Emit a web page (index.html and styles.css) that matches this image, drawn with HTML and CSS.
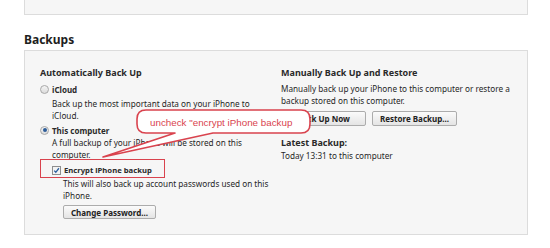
FILE: index.html
```html
<!DOCTYPE html>
<html>
<head>
<meta charset="utf-8">
<link rel="stylesheet" href="styles.css">
</head>
<body>
<div class="page">
  <div class="top-panel"></div>
  <h2 class="section-title">Backups</h2>
  <div class="panel">
    <div class="col col-left">
      <div class="heading">Automatically Back Up</div>
      <div class="option opt-icloud">
        <span class="radio"></span><span class="opt-label">iCloud</span>
      </div>
      <div class="desc indent desc-icloud">Back up the most important data on your iPhone to<br>iCloud.</div>
      <div class="option opt-computer">
        <span class="radio checked"></span><span class="opt-label">This computer</span>
      </div>
      <div class="desc indent">A full backup of your iPhone will be stored on this<br>computer.</div>
      <div class="option encrypt">
        <span class="checkbox">
          <svg width="9" height="9" viewBox="0 0 9 9"><path d="M1.6 4.6 L3.6 6.8 L7.6 1.6" fill="none" stroke="#2d5f9e" stroke-width="1.7"/></svg>
        </span><span class="opt-label">Encrypt iPhone backup</span>
      </div>
      <div class="desc indent2 desc-encrypt">This will also back up account passwords used on this<br>iPhone.</div>
      <div class="indent2 btn-row left-btns"><span class="btn btn-password">Change Password...</span></div>
    </div>
    <div class="col col-right">
      <div class="heading">Manually Back Up and Restore</div>
      <div class="desc right-desc">Manually back up your iPhone to this computer or restore a<br>backup stored on this computer.</div>
      <div class="btn-row right-btns"><span class="btn btn-backup">Back Up Now</span><span class="btn btn-restore">Restore Backup...</span></div>
      <div class="heading latest">Latest Backup:</div>
      <div class="desc">Today 13:31 to this computer</div>
    </div>
    <div class="highlight"></div>
    <div class="callout">
      <svg class="callout-shape" width="240" height="60" viewBox="0 0 240 60">
        <path d="M61 2 H216 Q225 2 225 11 V16 Q225 25 216 25 H128 L18 49 L90 25 H61 Q52 25 52 16 V11 Q52 2 61 2 Z" fill="#ffffff" stroke="#d9434e" stroke-width="1.6" stroke-linejoin="round"/>
      </svg>
      <span class="callout-text">uncheck "encrypt iPhone backup</span>
    </div>
  </div>
</div>
</body>
</html>
```
FILE: styles.css
```css
* { box-sizing: border-box; }
body {
  margin: 0;
  background: #ffffff;
  font-family: "Noto Sans", "Open Sans", sans-serif;
  color: #2b2b2b;
}
.page {
  width: 550px;
  height: 248px;
  padding: 0 22px 0 24px;
  overflow: hidden;
}
.top-panel {
  height: 15px;
  background: #f6f6f6;
  border: 1px solid #dcdcdc;
  border-top: none;
}
.section-title {
  margin: 17px 0 0 0;
  font-size: 12px;
  line-height: 16px;
  font-weight: 700;
  color: #1e1e1e;
  height: 18px;
}
.panel {
  position: relative;
  display: grid;
  grid-template-columns: 241px 1fr;
  height: 185px;
  background: #f6f6f6;
  border: 1px solid #dcdcdc;
  padding: 15px 0 0 15px;
}
.heading {
  font-size: 9px;
  font-weight: 700;
  line-height: 14px;
  color: #2a2a2a;
  white-space: nowrap;
}
.desc {
  font-size: 8.2px;
  line-height: 12px;
  color: #262626;
  white-space: nowrap;
}
.option {
  display: flex;
  align-items: center;
  gap: 3px;
  height: 14px;
  font-size: 8px;
  font-weight: 700;
  white-space: nowrap;
}
.opt-icloud { margin-top: 2px; }
.desc-icloud { margin-top: 2px; }
.opt-computer { margin-top: 1px; }
.encrypt { margin-top: 2px; padding-left: 12px; font-size: 7.7px; }
.desc-encrypt { margin-top: 1px; }
.indent { padding-left: 12px; }
.indent2 { padding-left: 23px; }
.radio {
  width: 9px;
  height: 9px;
  border-radius: 50%;
  border: 1px solid #a8a8a8;
  background: linear-gradient(#f4f4f4, #dcdcdc);
  display: inline-flex;
  align-items: center;
  justify-content: center;
}
.radio.checked::after {
  content: "";
  width: 4px;
  height: 4px;
  border-radius: 50%;
  background: #2d5d99;
}
.checkbox {
  width: 9px;
  height: 9px;
  border: 1px solid #8e8e8e;
  background: #f3f3f3;
  display: inline-flex;
  align-items: center;
  justify-content: center;
}
.checkbox svg { display: block; }
.btn-row {
  display: flex;
  gap: 6px;
}
.left-btns { margin-top: 3px; }
.btn {
  display: inline-flex;
  align-items: center;
  justify-content: center;
  height: 14px;
  border: 1px solid #acacac;
  border-radius: 2px;
  background: linear-gradient(#fbfbfb, #e4e4e4);
  font-size: 8px;
  font-weight: 700;
  color: #222;
  padding: 0;
  white-space: nowrap;
}
.btn-password { width: 93px; }
.right-desc { margin-top: 3px; }
.right-btns { margin-top: 4px; height: 15px; }
.right-btns .btn { height: 15px; }
.btn-backup { width: 85px; }
.btn-restore { width: 85px; }
.latest { margin-top: 10px; }
.highlight {
  position: absolute;
  left: 15px;
  top: 108px;
  width: 125px;
  height: 19px;
  border: 1.6px solid #d9434e;
}
.callout {
  position: absolute;
  left: 60px;
  top: 57px;
  width: 240px;
  height: 60px;
}
.callout-shape { position: absolute; left: 0; top: 0; }
.callout-text {
  position: absolute;
  left: 65px;
  top: 7.5px;
  font-family: "Liberation Sans", Arial, sans-serif;
  font-size: 9.8px;
  line-height: 13px;
  color: #d9434e;
  white-space: nowrap;
}
```
